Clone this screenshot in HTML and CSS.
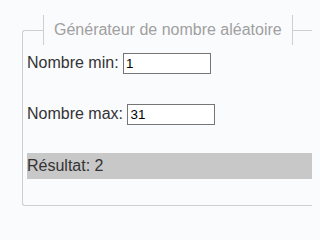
FILE: index.html
```html
<!DOCTYPE html>
<html lang="fr">
<head>
<meta charset="utf-8">
<title>Générateur de nombre aléatoire</title>
<link rel="stylesheet" href="styles.css">
</head>
<body>
<fieldset class="gen">
  <legend class="gen-title">Générateur de nombre aléatoire</legend>
  <div class="row"><label for="min">Nombre min:</label> <input id="min" class="num" type="text" value="1"></div>
  <div class="row"><label for="max">Nombre max:</label> <input id="max" class="num" type="text" value="31"></div>
  <div class="result">Résultat: 2</div>
</fieldset>
</body>
</html>
```
FILE: styles.css
```css
body {
  margin: 0;
  padding: 15px 0 0 22px;
  background: #fafbfd;
  font-family: "Liberation Sans", Arial, sans-serif;
  font-size: 16px;
  color: #333;
}
.gen {
  box-sizing: border-box;
  width: 290px;
  margin: 0;
  padding: 0 0 26px 4px;
  border: 1px solid #cfcfcf;
  border-right: 0;
  border-radius: 3px 0 0 3px;
}
.gen-title {
  margin-left: 16px;
  padding: 6px 10px;
  border-left: 1px solid #cfcfcf;
  border-right: 1px solid #cfcfcf;
  color: #a0a0a0;
  font-size: 16px;
}
.row {
  margin-top: 6px;
  margin-bottom: 28px;
  line-height: 23px;
}
.row + .row {
  margin-top: 0;
}
.num {
  width: 88px;
  height: 21px;
  box-sizing: border-box;
  margin: 0;
  padding: 1px 2px;
  border: 1px solid #767676;
  background: #fff;
  font-family: "Liberation Sans", Arial, sans-serif;
  font-size: 13.33px;
  color: #000;
}
.result {
  background: #c8c8c8;
  padding: 4px 0;
  line-height: 18px;
}
```
